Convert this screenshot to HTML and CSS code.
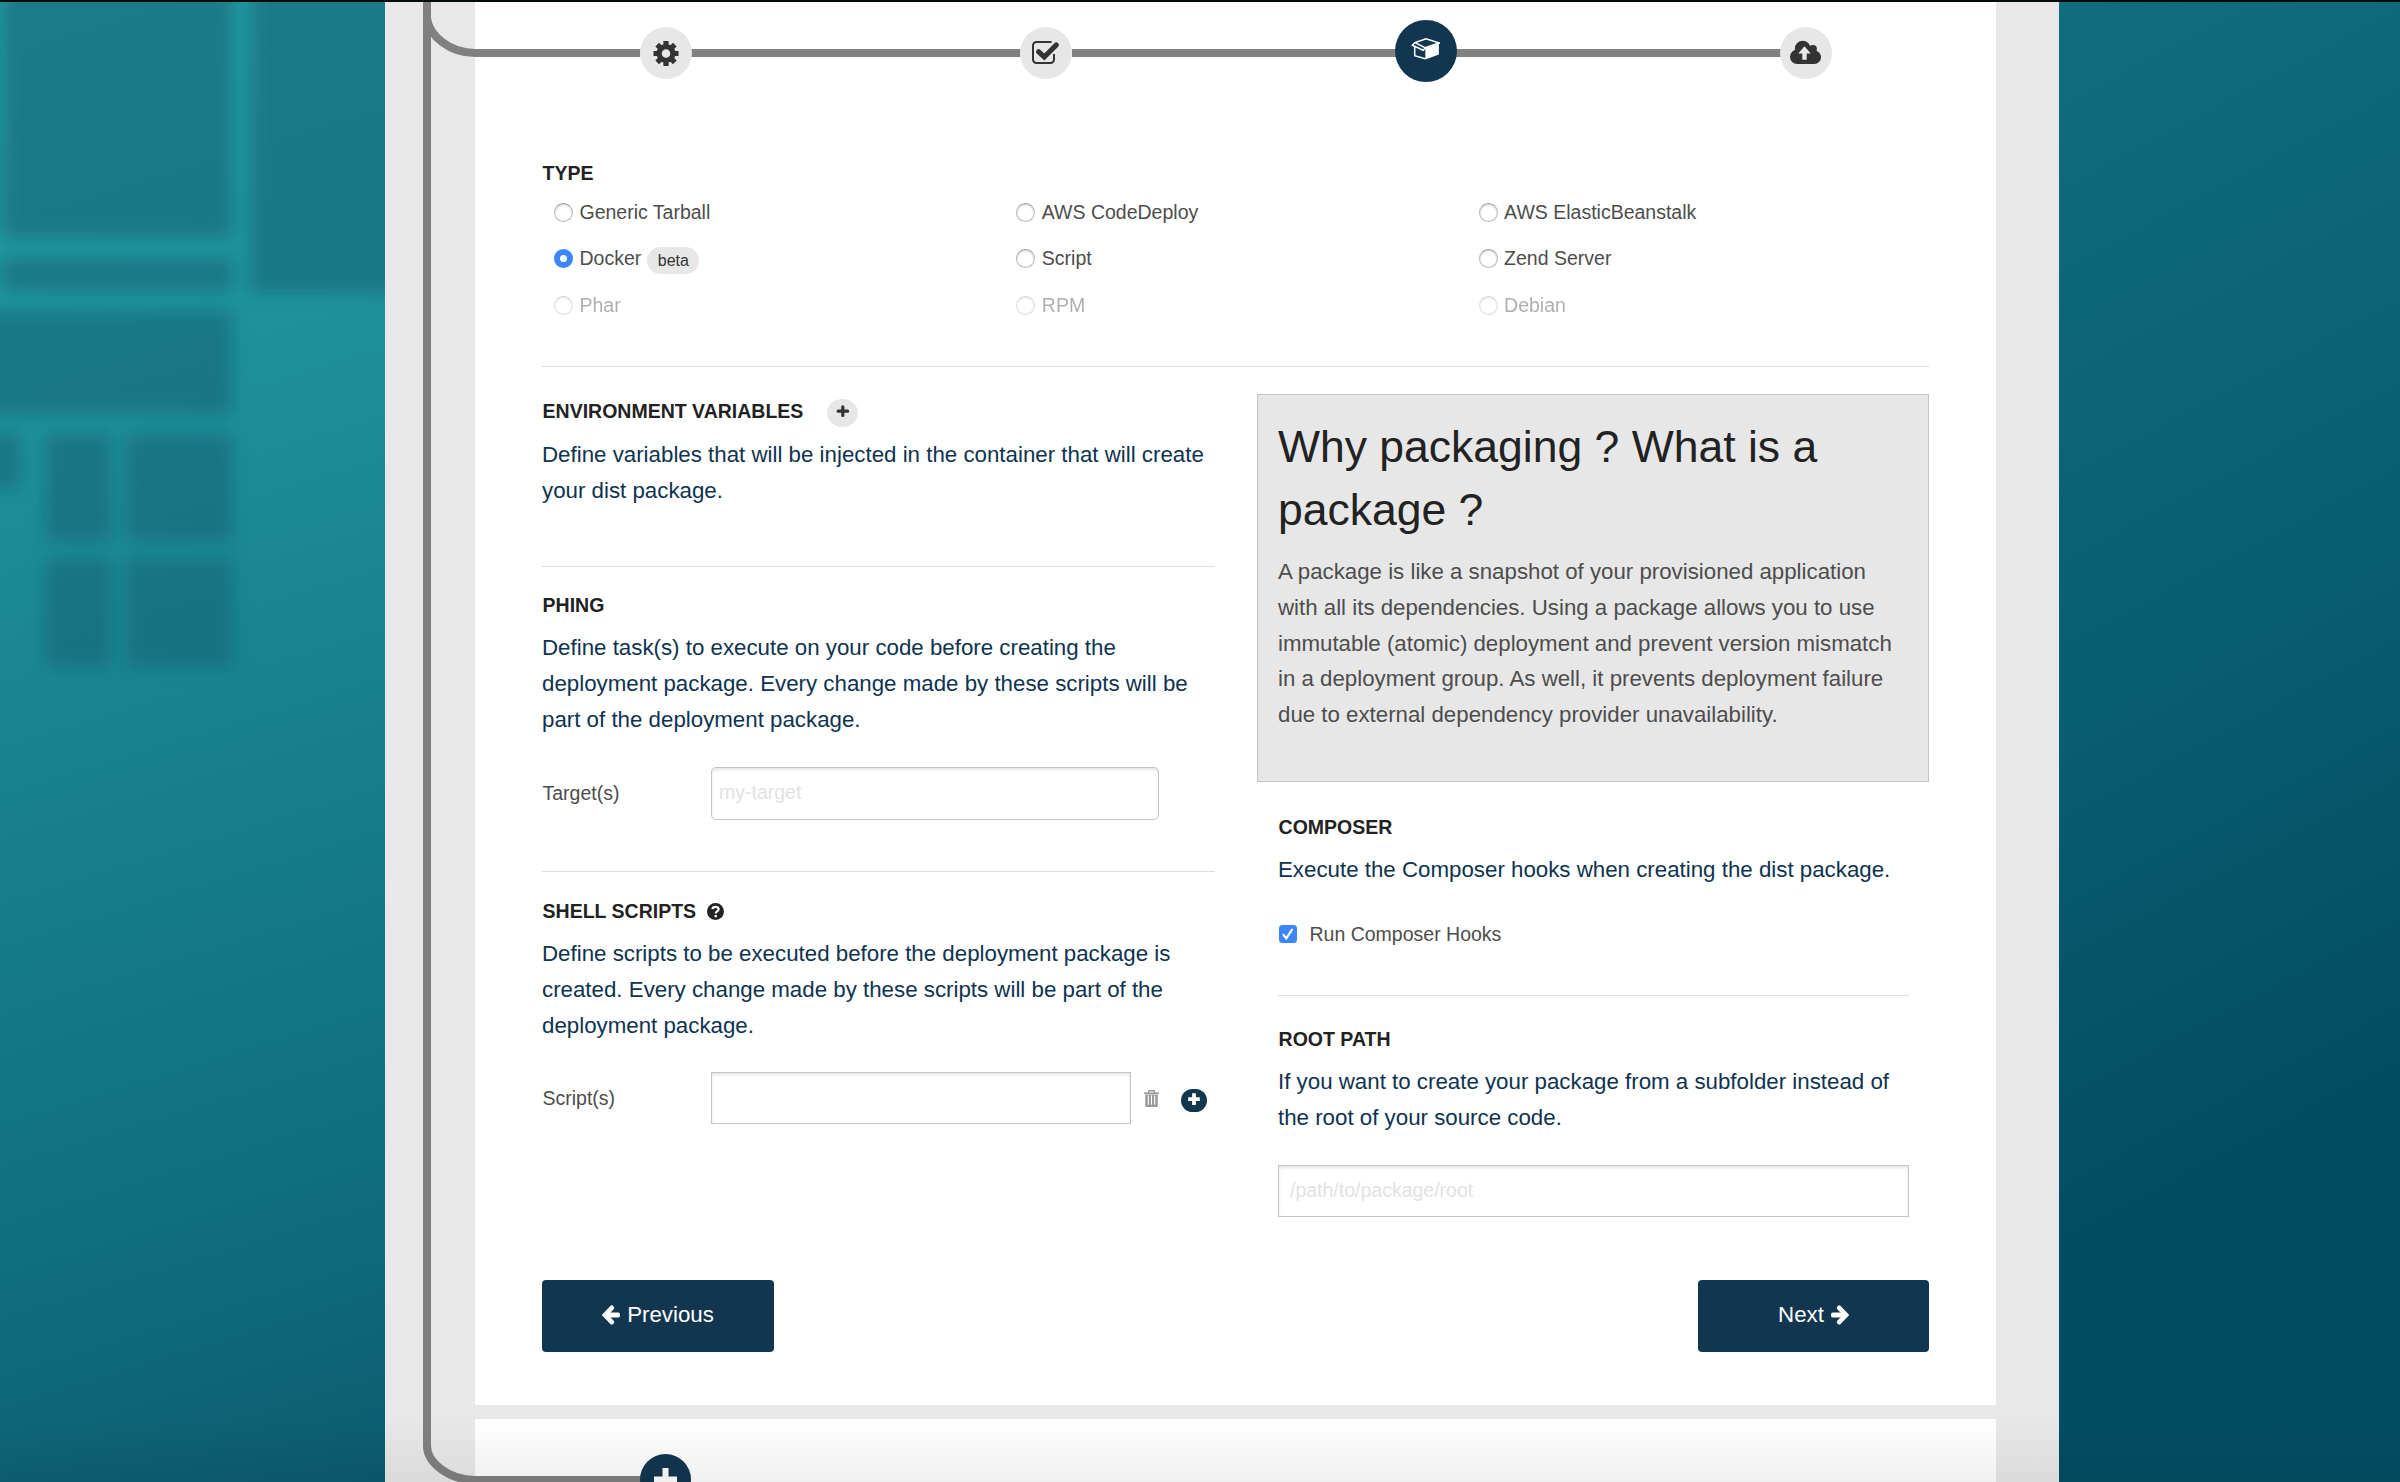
FILE: index.html
```html
<!DOCTYPE html>
<html lang="en">
<head>
<meta charset="utf-8">
<title>Package settings</title>
<link rel="stylesheet" href="styles.css">
</head>
<body>
<svg class="backdrop" width="385" height="700" viewBox="0 0 385 700" aria-hidden="true">
  <defs><filter id="soft" x="-20%" y="-20%" width="140%" height="140%"><feGaussianBlur stdDeviation="8"/></filter></defs>
  <g filter="url(#soft)" fill="#155b72" fill-opacity=".5">
    <rect x="3" y="-30" width="229" height="267"/>
    <rect x="251" y="-30" width="180" height="322"/>
    <rect x="3" y="259" width="229" height="31"/>
    <rect x="-30" y="311" width="262" height="103"/>
    <rect x="-30" y="434" width="50" height="54"/>
    <rect x="46" y="434" width="65" height="107"/>
    <rect x="126" y="434" width="106" height="107"/>
    <rect x="46" y="559" width="65" height="107"/>
    <rect x="126" y="559" width="106" height="107"/>
  </g>
</svg>
<main class="page">
  <section class="card">
    <nav class="steps">
      <a class="step"><svg viewBox="0 0 52 52">
        <g stroke="#333" stroke-width="5.2"><path d="M26 14v5M26 34v5M13.500 26.500h5M33.500 26.500h5M17.200 17.700l3.500 3.500M31.300 31.800l3.500 3.500M34.800 17.700l-3.500 3.500M20.700 31.800l-3.500 3.500"/><circle cx="26" cy="26.500" r="6.900" fill="none"/></g></svg></a>
      <a class="step"><svg viewBox="0 0 52 52" fill="none" stroke="#333">
        <path stroke-width="2" d="M31.500 15H16.500a3.500 3.500 0 0 0-3.500 3.500v14a3.500 3.500 0 0 0 3.500 3.500h14a3.500 3.500 0 0 0 3.500-3.500V27"/><path stroke-width="5.200" stroke-linecap="round" d="M18.700 24.800l5.600 5.200L36.300 18"/></svg></a>
      <a class="step step-active"><svg viewBox="0 0 62 62" fill="none" stroke="#fff" stroke-width="1.500">
        <path d="M19 23l12-4.300 14 4.600M44 23l-14 4.700-10-5M20 22.500l-2.600 2.800 10.700 5 2.400-2.600M19.700 27v8.700l10.600 3"/><path fill="#fff" stroke="none" d="M30.300 27.800l13.600-4.400v11.100l-13.600 5z"/></svg></a>
      <a class="step"><svg viewBox="0 0 52 52">
        <g fill="#333"><circle cx="22.700" cy="21.500" r="7.800"/><circle cx="33" cy="21.800" r="3.900"/><circle cx="17.200" cy="29.800" r="7.200"/><circle cx="34.300" cy="30.300" r="6.700"/><path d="M17 22h18v15H17z"/></g><path fill="#e7e7e7" d="M24.500 19.300l6.300 7.200h-4.100v6.300h-4.400v-6.300h-4.100z"/></svg></a>
    </nav>

    <form class="form">
      <h5 class="heading">TYPE</h5>
      <div class="types">
        <label class="type"><i class="radio"></i>Generic Tarball</label>
        <label class="type"><i class="radio"></i>AWS CodeDeploy</label>
        <label class="type"><i class="radio"></i>AWS ElasticBeanstalk</label>
        <label class="type"><i class="radio radio-on"></i>Docker<span class="badge">beta</span></label>
        <label class="type"><i class="radio"></i>Script</label>
        <label class="type"><i class="radio"></i>Zend Server</label>
        <label class="type type-off"><i class="radio"></i>Phar</label>
        <label class="type type-off"><i class="radio"></i>RPM</label>
        <label class="type type-off"><i class="radio"></i>Debian</label>
      </div>

      <div class="columns">
        <div class="left">
          <section class="env">
            <h5 class="heading">ENVIRONMENT VARIABLES<svg class="add-env" viewBox="0 0 31 28"><ellipse cx="15.500" cy="14" rx="15.500" ry="14" fill="#e7e7e7"/><path stroke="#333" stroke-width="3.200" stroke-linecap="round" d="M15.800 7.800v8.600M11.200 12.200h9.400"/></svg></h5>
            <p class="text">Define variables that will be injected in the container that will create<br>your dist package.</p>
          </section>
          <section class="phing">
            <h5 class="heading">PHING</h5>
            <p class="text">Define task(s) to execute on your code before creating the<br>deployment package. Every change made by these scripts will be<br>part of the deployment package.</p>
            <div class="field"><span class="label">Target(s)</span><input class="input input-target" placeholder="my-target"></div>
          </section>
          <section class="shell">
            <h5 class="heading">SHELL SCRIPTS<svg class="help" viewBox="0 0 17 17"><circle cx="8.500" cy="8.500" r="8.500" fill="#222"/><path fill="none" stroke="#fff" stroke-width="2.300" d="M5.400 6.200c.5-3.300 6.300-3 6.200 0 0 1.900-2.900 1.900-2.900 4.400M8.700 11.900v2.300"/></svg></h5>
            <p class="text">Define scripts to be executed before the deployment package is<br>created. Every change made by these scripts will be part of the<br>deployment package.</p>
            <div class="field"><span class="label">Script(s)</span><input class="input input-script">
              <svg class="trash" viewBox="0 0 15 17" fill="none" stroke="#999"><path stroke-width="1.500" d="M0 3.200h15M4.500 3V1.500q0-.8.800-.8h4.400q.8 0 .8.800V3"/><path fill="#999" stroke="none" d="M1.200 4.500h12.600v11q0 1.500-1.500 1.500H2.700q-1.500 0-1.500-1.500z"/><path stroke="#fff" stroke-width="1.100" d="M4.300 5.500v9.300M7.500 5.500v9.300M10.700 5.500v9.300"/></svg>
              <svg class="add-script" viewBox="0 0 26 23"><rect width="26" height="23" rx="11.500" fill="#12364f"/><path stroke="#fff" stroke-width="3.800" d="M13 4.300v11.600M7.200 10.100h11.600"/></svg>
            </div>
          </section>
        </div>
        <div class="right">
          <aside class="callout">
            <h3 class="callout-title">Why packaging ? What is a<br>package ?</h3>
            <p class="callout-text">A package is like a snapshot of your provisioned application<br>with all its dependencies. Using a package allows you to use<br>immutable (atomic) deployment and prevent version mismatch<br>in a deployment group. As well, it prevents deployment failure<br>due to external dependency provider unavailability.</p>
          </aside>
          <section class="composer">
            <h5 class="heading">COMPOSER</h5>
            <p class="text">Execute the Composer hooks when creating the dist package.</p>
            <label class="check"><svg class="checkbox" viewBox="0 0 18 18"><rect width="18" height="18" rx="3.500" fill="#3b86fb"/><path fill="none" stroke="#fff" stroke-width="2.200" stroke-linecap="round" d="M4.400 9.800l2.900 3.600L13 4.700"/></svg>Run Composer Hooks</label>
          </section>
          <section class="root">
            <h5 class="heading">ROOT PATH</h5>
            <p class="text">If you want to create your package from a subfolder instead of<br>the root of your source code.</p>
            <input class="input input-root" placeholder="/path/to/package/root">
          </section>
        </div>
      </div>

      <div class="actions">
        <a class="button">
          <svg class="arrow" viewBox="0 0 18 20"><path fill="none" stroke="#fff" stroke-width="4.800" stroke-linecap="round" d="M15.800 10H4"/><path fill="none" stroke="#fff" stroke-width="4.600" stroke-linecap="round" d="M9.800 2.800L3 10l6.800 7.200"/></svg>Previous</a>
        <a class="button button-next">Next<svg class="arrow" viewBox="0 0 18 20"><path fill="none" stroke="#fff" stroke-width="4.800" stroke-linecap="round" d="M2.200 10H14"/><path fill="none" stroke="#fff" stroke-width="4.600" stroke-linecap="round" d="M8.200 2.800L15 10l-6.800 7.200"/></svg></a>
      </div>
    </form>
  </section>
  <section class="card card-next"></section>
  <svg class="track" width="1611" height="1482" viewBox="385 0 1611 1482" fill="none" aria-hidden="true">
    <g stroke="#808080" stroke-width="8">
      <path d="M427 0V1446C427 1462 448 1480 475 1480H660"/><path d="M427 18C429 36 450 53 475 53H640.500M691 53h329.500M1072 53h324M1456 53h325.500"/>
    </g>
    <circle cx="665.500" cy="1479.500" r="25.500" fill="#12364f"/><path stroke="#fff" stroke-width="6" d="M665.500 1468v14M654 1479.500h23"/>
  </svg>
</main>
<div class="shade"></div>
<div class="topline"></div>
</body>
</html>
```
FILE: styles.css
```css
* { box-sizing: border-box; }
body {
  margin: 0;
  height: 1482px;
  overflow: hidden;
  position: relative;
  font-family: "Liberation Sans", Arial, sans-serif;
  color: #4d4d4d;
  background:
    linear-gradient(163deg, #229a9f 0%, #1e909a 27%, #0f6a7b 85%, #0b5b6e 100%) left / 385px 100% no-repeat,
    linear-gradient(152deg, #116d7d 0%, #085d70 45%, #034d62 75%) right / 342px 100% no-repeat,
    #034d62;
}
h3, h5, p { margin: 0; }
svg { display: block; flex: none; }
.backdrop { position: absolute; left: 0; top: 0; }
.page {
  position: relative;
  width: 1674px;
  height: 1482px;
  margin-left: 385px;
  padding: 0 63px 0 90px;
  background: #e8e8e8;
  overflow: hidden;
}
.track { position: absolute; left: 0; top: 0; }
.card { height: 1405px; background: #fff; }
.card-next { margin-top: 14px; height: 63px; }
.steps {
  position: relative;
  z-index: 1;
  height: 106px;
  padding-left: 1px;
  display: grid;
  grid-template-columns: repeat(4, 1fr);
  align-items: center;
  justify-items: center;
}
.step { width: 52px; height: 52px; border-radius: 50%; background: #e7e7e7; }
.step-active { width: 62px; height: 62px; margin-bottom: 4px; background: #12364f; }
.form { padding: 53px 67px 0; }
.heading {
  display: flex;
  align-items: center;
  height: 28px;
  padding-left: .6px;
  font-size: 19.5px;
  line-height: 28px;
  font-weight: bold;
  color: #222;
}
.text { font-size: 22.300px; line-height: 36px; color: #0e3350; white-space: nowrap; margin-top: 11px; }
.types {
  display: grid;
  grid-template-columns: repeat(3, 462.300px);
  grid-auto-rows: 46.500px;
  margin-top: 2px;
  height: 178px;
  border-bottom: 1px solid #ddd;
}
.type { display: flex; align-items: center; padding-left: 12px; font-size: 19.5px; }
.type-off { opacity: .45; }
.radio {
  width: 19px;
  height: 19px;
  margin-right: 6.500px;
  border-radius: 50%;
  border: 1px solid #b8b8b8;
  border-top-color: #999;
  background: #fff;
  box-shadow: inset 0 1px 2px #ccc;
}
.radio-on { border: 6px solid #3b86fb; box-shadow: none; }
.badge {
  margin-left: 6px;
  margin-top: 4px;
  padding: 0 10.500px;
  line-height: 27px;
  border-radius: 14px;
  background: #e7e7e7;
  font-size: 16px;
  color: #333;
}
.columns { display: flex; justify-content: space-between; height: 913px; }
.left { width: 673px; }
.right { width: 672px; padding-top: 27px; }
.env { height: 200px; padding-top: 30px; border-bottom: 1px solid #ddd; }
.env .text { margin-top: 12px; }
.add-env { width: 31px; height: 28px; margin: 4px 0 0 24px; }
.phing { height: 305px; padding-top: 24px; border-bottom: 1px solid #ddd; }
.shell { padding-top: 25px; }
.help { width: 17px; height: 17px; margin-left: 11px; }
.field { display: flex; align-items: center; margin-top: 29px; }
.shell .field { margin-top: 28px; }
.label { width: 169px; padding-left: .5px; font-size: 19.5px; }
.input {
  display: block;
  height: 52px;
  padding: 0 0 2px 7px;
  border: 1px solid #c4c4c4;
  box-shadow: inset 0 2px 3px rgba(0, 0, 0, .1);
  background: #fff;
  font: 19.5px "Liberation Sans", Arial, sans-serif;
}
.input::placeholder { color: #e2e2e2; opacity: 1; }
.input-target { width: 448px; height: 53px; border-radius: 5px; }
.input-script { width: 420px; }
.input-root { width: 631px; padding-left: 11px; margin-top: 29px; }
.trash { width: 15px; height: 17px; margin-left: 13px; }
.add-script { width: 26px; height: 23px; margin: 5px 0 0 22px; }
.callout {
  height: 388px;
  padding: 20px 20px 0;
  border: 1px solid #c6c6c6;
  background: #e7e7e7;
  white-space: nowrap;
}
.callout-title { font-size: 44.500px; line-height: 63px; font-weight: normal; color: #222; }
.callout-text { margin-top: 13px; font-size: 22.280px; line-height: 35.800px; }
.composer { margin: 31px 20px 0 21px; height: 183px; border-bottom: 1px solid #ddd; }
.check { display: flex; align-items: center; height: 30px; margin-top: 31px; padding-left: .5px; font-size: 19.5px; }
.checkbox { width: 18px; height: 18px; margin-right: 13px; }
.root { margin: 29px 20px 0 21px; }
.actions { display: flex; justify-content: space-between; }
.button {
  display: flex;
  align-items: center;
  justify-content: center;
  gap: 7px;
  width: 232px;
  height: 72px;
  padding-bottom: 3px;
  border-radius: 4px;
  background: #12364f;
  color: #fff;
  font-size: 22.300px;
}
.button-next { width: 231px; }
.arrow { width: 18px; height: 20px; }
.shade {
  position: absolute;
  left: 0;
  right: 0;
  top: 1419px;
  height: 63px;
  background: linear-gradient(rgba(0, 0, 0, 0), rgba(0, 0, 0, .06));
}
.topline { position: absolute; left: 0; right: 0; top: 0; height: 2px; background: #050a0c; }
```
